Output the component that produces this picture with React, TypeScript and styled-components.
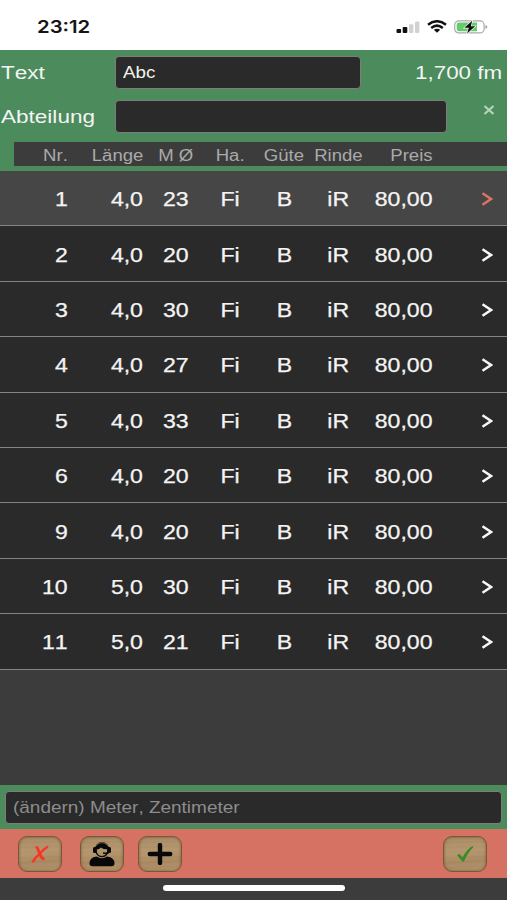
import React from "react";
import styled, { createGlobalStyle } from "styled-components";

const GlobalStyle = createGlobalStyle`
  * { box-sizing: border-box; }
  body { margin: 0; background: #3c3c3c; }
`;

const Screen = styled.main`
  width: 507px;
  height: 900px;
  display: flex;
  flex-direction: column;
  overflow: hidden;
  background: #3c3c3c;
  color: #f4f4f4;
  font-family: "Liberation Sans", Arial, sans-serif;
  font-kerning: none;
`;

const Wide = styled.span<{ $origin?: string; $scale?: number }>`
  display: inline-block;
  white-space: nowrap;
  transform: scaleX(${(p) => p.$scale ?? 1.2});
  transform-origin: ${(p) => p.$origin ?? "left"} center;
`;

const StatusBar = styled.header`
  flex: none;
  height: 50px;
  padding: 3px 19px 0 37px;
  display: flex;
  align-items: center;
  justify-content: space-between;
  background: #fff;
  color: #151515;
`;

const Clock = styled.time`
  font: 600 17.5px/22px Inter, sans-serif;
`;

const StatusIcons = styled.div`
  display: flex;
  align-items: center;
  gap: 7px;
  svg { display: block; }
`;

const Form = styled.section`
  flex: none;
  height: 121px;
  padding-top: 6px;
  background: #4b8b5c;
`;

const Field = styled.div`
  height: 32px;
  margin-bottom: 12px;
  display: flex;
  align-items: center;
`;

const FieldLabel = styled.label`
  width: 115px;
  padding: 2px 0 0 1px;
  font-size: 18.8px;
  line-height: 22px;
`;

const Box = styled.div<{ $width: number }>`
  width: ${(p) => p.$width}px;
  height: 33px;
  padding: 1px 0 0 7px;
  display: flex;
  align-items: center;
  border: 1px solid #7d7d7b;
  border-radius: 4px;
  background: #2a2a2a;
  font-size: 16px;
`;

const Total = styled.output`
  margin-left: auto;
  padding: 2px 5px 0 0;
  font-size: 18.8px;
  line-height: 22px;
`;

const ClearButton = styled.button`
  margin: 0 12px 12px auto;
  padding: 0;
  border: 0;
  background: none;
  line-height: 0;
`;

const columns = "54px 75px 66px 43px 64px 44px 73px 1fr";

const HeadRow = styled.div`
  height: 24px;
  margin: -2px 0 0 14px;
  display: grid;
  grid-template-columns: ${columns};
  align-items: center;
  background: #3c3c3c;
  color: #aaa;
  font-size: 15.6px;
`;

const List = styled.div`
  flex: 1;
  -webkit-text-stroke: 0.25px currentColor;
`;

const Row = styled.div<{ $active: boolean }>`
  height: 55.42px;
  padding-left: 14px;
  display: grid;
  grid-template-columns: ${columns};
  align-items: center;
  border-bottom: 1px solid #858585;
  background: ${(p) => (p.$active ? "#464646" : "#2a2a2a")};
  color: #f4f4f4;
  font-size: 19.4px;
`;

const Cell = styled.div<{ $align?: "right" | "center" }>`
  display: flex;
  justify-content: ${(p) => (p.$align === "center" ? "center" : "flex-end")};
  padding-top: 3px;
`;

const Chevron = styled.div<{ $active: boolean }>`
  justify-self: end;
  margin: 2px 14px 0 0;
  color: ${(p) => (p.$active ? "#dc7265" : "#f7f7f7")};
  svg { display: block; }
`;

const Entry = styled.section`
  flex: none;
  height: 44px;
  padding: 6px 5px 5px;
  background: #4b8b5c;
  color: #8d8d8d;
`;

const Toolbar = styled.nav`
  flex: none;
  height: 49px;
  padding: 0 20px 0 18px;
  display: flex;
  align-items: center;
  background: #d67264;
`;

const WoodButton = styled.button<{ $left?: string }>`
  width: 44px;
  height: 36px;
  padding: 0;
  margin-left: ${(p) => p.$left ?? "0"};
  display: grid;
  place-items: center;
  border: 1px solid #7d5637;
  border-radius: 9px;
  background: repeating-linear-gradient(178deg, rgba(112, 77, 42, 0.06) 0 1px, transparent 2px 5px),
    linear-gradient(175deg, #a98d67, #b69870 45%, #a98a63 70%, #b4946d);
  box-shadow: inset 0 0 3px rgba(95, 65, 35, 0.65);
  svg { display: block; }
`;

const Home = styled.footer`
  flex: none;
  height: 22px;
  padding: 7px 0 0 163px;
  background: #3c3c3c;
`;

const HomeBar = styled.div`
  width: 182px;
  height: 6px;
  border-radius: 3px;
  background: #fff;
`;

const rows = [
  ["1", "4,0", "23"],
  ["2", "4,0", "20"],
  ["3", "4,0", "30"],
  ["4", "4,0", "27"],
  ["5", "4,0", "33"],
  ["6", "4,0", "20"],
  ["9", "4,0", "20"],
  ["10", "5,0", "30"],
  ["11", "5,0", "21"],
];

const aligns = ["right", "right", "center", "center", "center", "center", "right"] as const;

function Cells({ values }: { values: string[] }) {
  return (
    <>
      {values.map((value, i) => (
        <Cell key={i} $align={aligns[i]}>
          <Wide $origin={aligns[i]} $scale={1.19}>{value}</Wide>
        </Cell>
      ))}
    </>
  );
}

function Signal() {
  return (
    <svg width="24" height="14" viewBox="0 0 24 14">
      <rect x="0.5" y="9" width="4.6" height="4" rx="1" fill="#111" />
      <rect x="6.7" y="7" width="4.6" height="6" rx="1" fill="#111" />
      <rect x="13" y="4.2" width="4.4" height="8.8" rx="1" fill="#d2d2d4" />
      <rect x="19" y="1.4" width="4.4" height="11.6" rx="1" fill="#d2d2d4" />
    </svg>
  );
}

function Wifi() {
  return (
    <svg width="20" height="13" viewBox="0 0 20 13" fill="none" stroke="#111" strokeWidth="2.5">
      <path d="M1 4.7Q10-2.2 19 4.7M4.2 8Q10 3.3 15.8 8" />
      <path d="M6.8 9.8Q10 7.6 13.2 9.8L10 12.8Z" fill="#111" stroke="none" />
    </svg>
  );
}

function Battery() {
  return (
    <svg width="34" height="14" viewBox="0 0 34 14">
      <rect x="0.7" y="0.9" width="29.4" height="12" rx="4" fill="#fff" stroke="#a8aaa8" strokeWidth="1.2" />
      <path d="M5 2.5H23V11.3H5Q2.7 11.3 2.7 9V4.8Q2.7 2.5 5 2.5Z" fill="#65cc6d" />
      <path d="M31.3 4.9Q33.4 5.3 33.4 7T31.3 9Z" fill="#a8aaa8" />
      <path d="M18.2 0.8L10.4 7.8H14.8L13.1 13.5L21.2 6.3H16.9Z" fill="#111" stroke="#fff" strokeWidth="1.2" paintOrder="stroke" />
    </svg>
  );
}

function Operator() {
  return (
    <svg width="28" height="28" viewBox="0 0 28 28">
      <path d="M1.5 23.5Q1.5 17.5 8.5 16.5Q14 20 19 16.5Q26.5 17.3 26.5 23.5Q26.5 26.3 23.5 26.3H4.5Q1.5 26.3 1.5 23.5Z" fill="#080808" />
      <ellipse cx="14" cy="9.6" rx="7.2" ry="7.6" fill="#080808" />
      <path d="M8.6 9.5Q11.5 9.2 12.7 7.4Q15.4 9.3 19.4 9.3Q19.5 15.7 14 15.9Q8.6 15.7 8.6 9.5Z" fill="#ae936d" />
      <path d="M7.4 6.2Q14-1 20.6 6.2" fill="none" stroke="#9b8464" strokeWidth="0.7" />
      <rect x="5" y="7" width="3.6" height="6" rx="1.5" fill="#080808" />
      <rect x="19.4" y="7" width="3.6" height="6" rx="1.5" fill="#080808" />
      <path d="M21.3 11.5Q20.7 13.8 15 13" fill="none" stroke="#080808" strokeWidth="1.5" />
    </svg>
  );
}

export default function App() {
  return (
    <Screen>
      <GlobalStyle />
      <StatusBar>
        <Clock><Wide $scale={1.16}>23:12</Wide></Clock>
        <StatusIcons><Signal /><Wifi /><Battery /></StatusIcons>
      </StatusBar>
      <Form>
        <Field>
          <FieldLabel><Wide>Text</Wide></FieldLabel>
          <Box $width={246}><Wide $scale={1.17}>Abc</Wide></Box>
          <Total><Wide $origin="right" $scale={1.19}>1,700 fm</Wide></Total>
        </Field>
        <Field>
          <FieldLabel><Wide>Abteilung</Wide></FieldLabel>
          <Box $width={332} />
          <ClearButton aria-label="Löschen">
            <svg width="12" height="10" viewBox="0 0 12 10">
              <path d="M1.5 1L10.5 9M10.5 1L1.5 9" stroke="#b6d2b9" strokeWidth="2.3" />
            </svg>
          </ClearButton>
        </Field>
        <HeadRow>
          <Cells values={["Nr.", "Länge", "M Ø", "Ha.", "Güte", "Rinde", "Preis"]} />
        </HeadRow>
      </Form>
      <List>
        {rows.map((row, i) => (
          <Row key={row[0]} $active={i === 0}>
            <Cells values={[...row, "Fi", "B", "iR", "80,00"]} />
            <Chevron $active={i === 0}>
              <svg width="12" height="14" viewBox="0 0 12 14">
                <path d="M1.5 1.2L10 7L1.5 12.8" fill="none" stroke="currentColor" strokeWidth="2.5" />
              </svg>
            </Chevron>
          </Row>
        ))}
      </List>
      <Entry>
        <Box $width={497}><Wide $scale={1.185}>(ändern) Meter, Zentimeter</Wide></Box>
      </Entry>
      <Toolbar>
        <WoodButton aria-label="Abbrechen">
          <svg width="18" height="18" viewBox="0 0 18 18">
            <path d="M4.4 1.8Q7 6.5 8 10.2Q9 13.7 12 15.2Q13.3 14.8 13.8 13.7Q10.8 11.8 9.4 7.5Q8.5 4 6.7 1.5Z" fill="#fb3324" stroke="#fb3324" strokeWidth="0.5" />
            <path d="M16.8 0.8Q11.5 3.5 7 9Q3.3 12.5 0.7 16.5L2.8 17.4Q5.2 13 9 9.6Q13.2 4.8 16.8 2.8Z" fill="#fb3324" stroke="#fb3324" strokeWidth="0.5" />
          </svg>
        </WoodButton>
        <WoodButton $left="18px" aria-label="Kontakt"><Operator /></WoodButton>
        <WoodButton $left="14px" aria-label="Hinzufügen">
          <svg width="26" height="22" viewBox="0 0 26 22">
            <path d="M13 2V20M2.8 11H23.2" stroke="#080808" strokeWidth="4.4" strokeLinecap="round" />
          </svg>
        </WoodButton>
        <WoodButton $left="auto" aria-label="Bestätigen">
          <svg width="18" height="18" viewBox="0 0 18 18">
            <path d="M1.1 10.2Q3 8.1 4.3 9.7L6.4 12.4Q11.2 4 16.7 1.1L17 2.7Q12.3 6.5 8 16.3L6.5 16.7Q4.1 13.5 1.1 10.2Z" fill="#398b23" />
          </svg>
        </WoodButton>
      </Toolbar>
      <Home><HomeBar /></Home>
    </Screen>
  );
}
